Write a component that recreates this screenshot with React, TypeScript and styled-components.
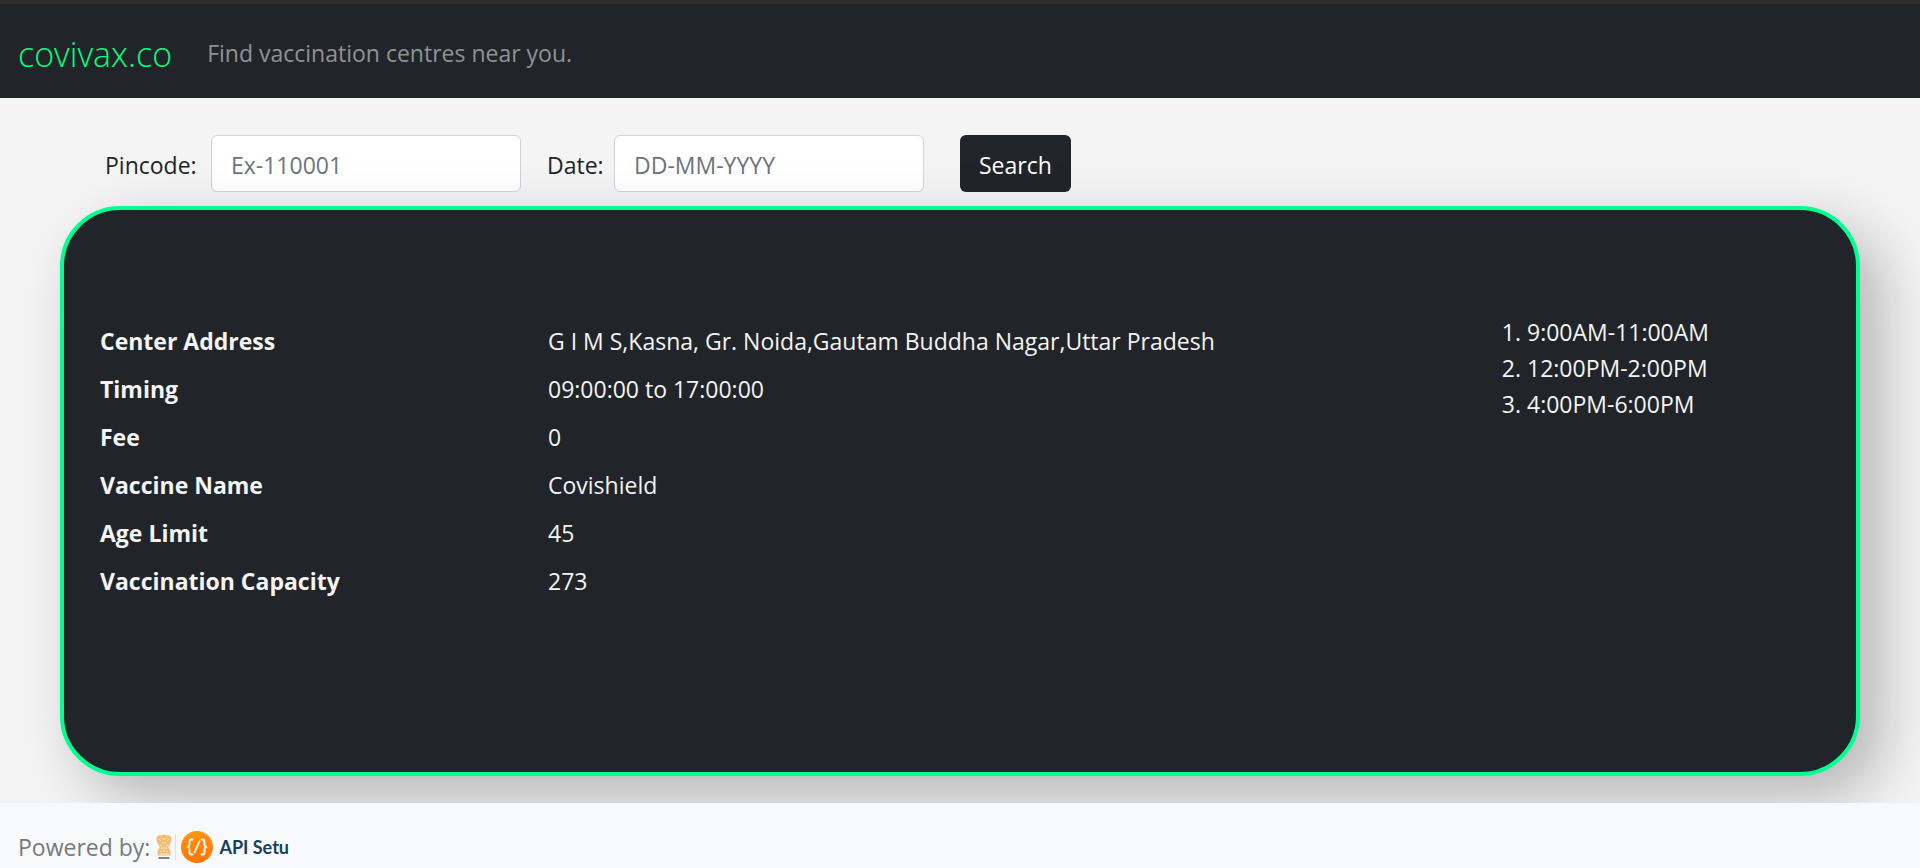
import React from "react";
import styled, { createGlobalStyle } from "styled-components";

const GlobalStyle = createGlobalStyle`
  *, *::before, *::after { box-sizing: border-box; }
  body {
    margin: 0;
    background: #f4f4f4;
    color: #212529;
    font-family: "Open Sans", "Noto Sans", sans-serif;
    font-size: 23px;
    line-height: 36px;
  }
`;

const Page = styled.div`
  display: flex;
  flex-direction: column;
  min-height: 100vh;
`;

const Header = styled.header`
  display: flex;
  align-items: center;
  gap: 35px;
  padding: 26px 18px 20px;
  border-top: 4px solid #2d2d2d;
  background: #212529;
`;

const Brand = styled.a`
  color: #00ff7f;
  font-size: 34px;
  font-weight: 300;
  line-height: 48px;
  text-decoration: none;
`;

const Tagline = styled.span`
  padding-bottom: 2px;
  color: #909294;
`;

const Main = styled.main`
  flex: 1;
  padding: 37px 60px 27px;
`;

const SearchForm = styled.form`
  display: flex;
  flex-wrap: wrap;
  align-items: center;
  margin-bottom: 14px;
  padding-left: 45px;
`;

const Field = styled.div<{ $labelWidth: number; $gapAfter: number }>`
  display: grid;
  grid-template-columns: ${(p) => p.$labelWidth}px 310px;
  align-items: center;
  margin-right: ${(p) => p.$gapAfter}px;
`;

const Label = styled.label`
  padding-top: 2px;
`;

const TextField = styled.input`
  width: 100%;
  height: 57px;
  padding: 2px 19px 0;
  border: 1px solid #ced4da;
  border-radius: 6px;
  background: #fff;
  color: #212529;
  font: inherit;

  &::placeholder {
    color: #6c757d;
    opacity: 1;
  }
`;

const SearchButton = styled.button`
  height: 57px;
  padding: 2px 19px 0;
  border: 0;
  border-radius: 6px;
  background: #212529;
  color: #fff;
  font: inherit;
`;

const Card = styled.section`
  position: relative;
  display: grid;
  grid-template-columns: 3fr 1fr;
  align-items: start;
  padding: 104px 0 173px;
  border: 4px solid #00ff91;
  border-radius: 60px;
  background: #212529;
  box-shadow: 22px 22px 60px rgba(0, 0, 0, 0.26);
  color: #f4f4f4;
`;

const Details = styled.dl`
  display: grid;
  grid-template-columns: 1fr 2fr;
  row-gap: 12px;
  margin: 0;
  padding-top: 9px;
`;

const Term = styled.dt`
  padding-left: 36px;
  font-weight: 700;
`;

const Value = styled.dd`
  margin: 0;
  padding-left: 36px;
`;

const Slots = styled.ol`
  margin: 0;
  padding-left: 119px;
`;

const Footer = styled.footer`
  position: relative;
  display: flex;
  align-items: center;
  gap: 6px;
  padding: 26px 18px 3px;
  background: #f8f9fb;
  color: #77797b;
`;

const SetuLink = styled.a`
  display: flex;
  align-items: center;
  gap: 5px;
  color: #17405c;
  font-family: Lato, sans-serif;
  font-size: 18px;
  font-weight: 700;
  text-decoration: none;
`;

const details = [
  ["Center Address", "G I M S,Kasna, Gr. Noida,Gautam Buddha Nagar,Uttar Pradesh"],
  ["Timing", "09:00:00 to 17:00:00"],
  ["Fee", "0"],
  ["Vaccine Name", "Covishield"],
  ["Age Limit", "45"],
  ["Vaccination Capacity", "273"],
];

const slots = ["9:00AM-11:00AM", "12:00PM-2:00PM", "4:00PM-6:00PM"];

function SetuMark() {
  return (
    <svg width="58" height="34" viewBox="0 0 58 34" aria-hidden="true">
      <g fill="#f5bd72">
        <path d="M5 5.500q3-2 6 0 3-1 4 1.500.9 2.500 0 5l-1.500 3-1 1.500v3h-9v-3l-1-1.500L1 12q-.9-2.500 0-5Q2 4.500 5 5.500z" />
        <path d="M3 18.500q5-2 10 0l1.500 2.500v4.500h-13V21z" />
      </g>
      <path
        d="M3 9l2 2M13 9l-2 2M7 8l1 2 1-2M6 13h4M4 15l2 1M12 15l-2 1M4.500 18h7M4 21.500h2M7 21h2M10 21.500h2M3 24h10"
        stroke="#fbe3c2"
        fill="none"
      />
      <path d="M2.500 28h11" stroke="#5d5d58" strokeWidth="1.500" />
      <path d="M19.500 4v26" stroke="#dcdfe2" />
      <defs>
        <linearGradient id="setu" x1="0" y1="0" x2="0" y2="1">
          <stop offset="0" stopColor="#ff9412" />
          <stop offset="1" stopColor="#ff7404" />
        </linearGradient>
      </defs>
      <circle cx="41" cy="17" r="16" fill="url(#setu)" />
      <g fill="none" stroke="#fff" strokeWidth="1.800" strokeLinecap="round" strokeLinejoin="round">
        <path d="M36.500 9.500h-1q-2 0-2 2v3q0 2-2 2.500q2 .5 2 2.500v3q0 2 2 2h1" />
        <path d="M45.500 9.500h1q2 0 2 2v3q0 2 2 2.500q-2 .5-2 2.500v3q0 2-2 2h-1" />
        <path d="M43.500 11.500l-5 11" />
      </g>
    </svg>
  );
}

export default function App() {
  return (
    <>
      <GlobalStyle />
      <Page>
        <Header>
          <Brand href="#">covivax.co</Brand>
          <Tagline>Find vaccination centres near you.</Tagline>
        </Header>
        <Main>
          <SearchForm onSubmit={(e: React.FormEvent) => e.preventDefault()}>
            <Field $labelWidth={106} $gapAfter={26}>
              <Label htmlFor="pincode">Pincode:</Label>
              <TextField id="pincode" type="text" placeholder="Ex-110001" />
            </Field>
            <Field $labelWidth={67} $gapAfter={36}>
              <Label htmlFor="date">Date:</Label>
              <TextField id="date" type="text" placeholder="DD-MM-YYYY" />
            </Field>
            <SearchButton type="submit">Search</SearchButton>
          </SearchForm>
          <Card>
            <Details>
              {details.map(([term, value]) => (
                <React.Fragment key={term}>
                  <Term>{term}</Term>
                  <Value>{value}</Value>
                </React.Fragment>
              ))}
            </Details>
            <Slots>
              {slots.map((slot) => (
                <li key={slot}>{slot}</li>
              ))}
            </Slots>
          </Card>
        </Main>
        <Footer>
          <span>Powered by:</span>
          <SetuLink href="#">
            <SetuMark />
            API Setu
          </SetuLink>
        </Footer>
      </Page>
    </>
  );
}
